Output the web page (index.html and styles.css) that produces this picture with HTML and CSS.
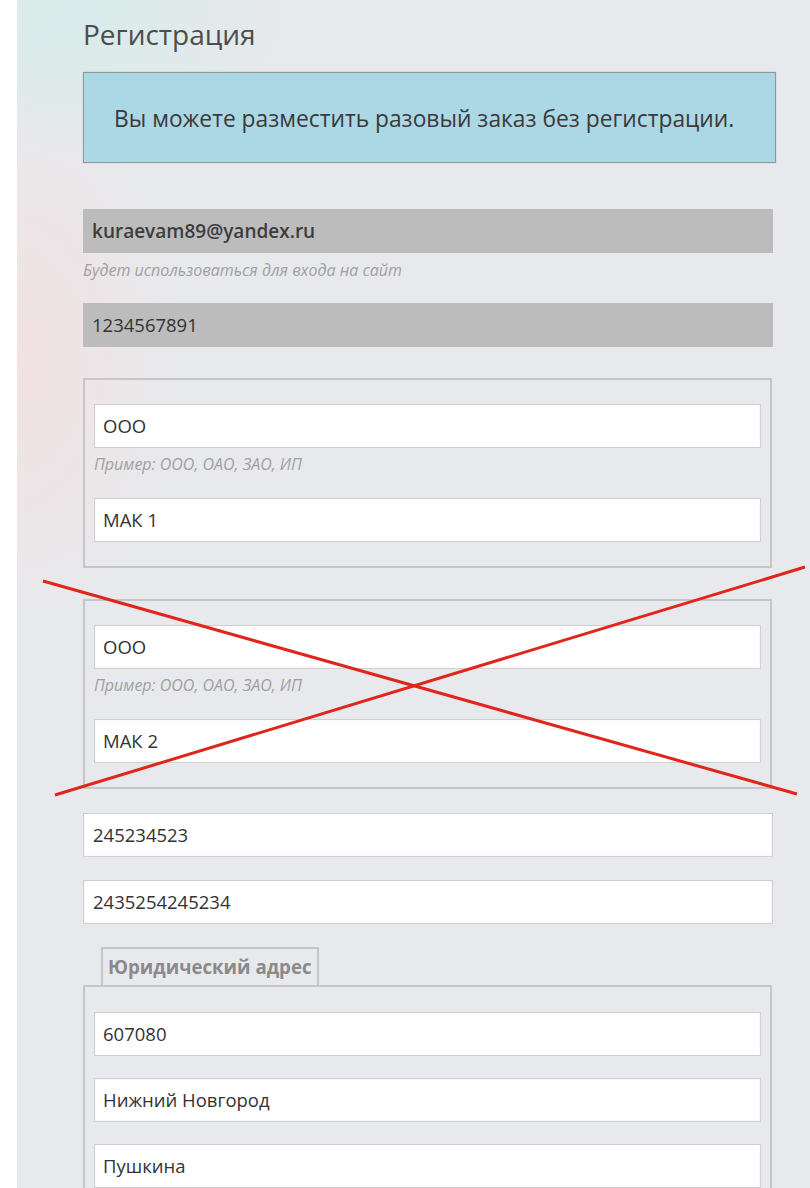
FILE: index.html
```html
<!DOCTYPE html>
<html lang="ru">
<head>
    <meta charset="UTF-8">
    <meta name="viewport" content="width=device-width, initial-scale=1.0">
    <title>Регистрация</title>
    <link rel="stylesheet" href="styles.css">
</head>

<body>
    <div class="panel">
        <h1 class="title">Регистрация</h1>

        <div class="notice">Вы можете разместить разовый заказ без регистрации.</div>

        <div class="field field-off email">kuraevam89@yandex.ru</div>
        <p class="hint">Будет использоваться для входа на сайт</p>

        <div class="field field-off phone">1234567891</div>

        <div class="group first">
            <div class="field">ООО</div>
            <p class="hint">Пример: ООО, ОАО, ЗАО, ИП</p>
            <div class="field second">МАК 1</div>
        </div>

        <div class="struck">
            <div class="group">
                <div class="field">ООО</div>
                <p class="hint">Пример: ООО, ОАО, ЗАО, ИП</p>
                <div class="field second">МАК 2</div>
            </div>
            <!-- крест поверх второй организации -->
            <svg class="cross" viewBox="0 0 810 260" width="810" height="260">
                <line x1="43" y1="22" x2="797" y2="235" />
                <line x1="55" y1="236" x2="805" y2="8" />
            </svg>
        </div>

        <div class="field plain inn">245234523</div>
        <div class="field plain ogrn">2435254245234</div>

        <div class="tab">Юридический адрес</div>
        <div class="group address">
            <div class="field">607080</div>
            <div class="field next">Нижний Новгород</div>
            <div class="field next">Пушкина</div>
        </div>
    </div>
</body>

</html>
```

FILE: styles.css
```css
body {
    margin: 0;
    background: #fff;
    font-family: "Open Sans", "Noto Sans", sans-serif;
    color: #333;
}

.panel {
    margin-left: 17px;
    min-height: 1188px;
    padding: 17px 0 0 66px;
    box-sizing: border-box;
    background:
        radial-gradient(ellipse 160px 260px at 0 360px, rgba(246, 222, 222, 0.7), rgba(246, 222, 222, 0) 100%),
        radial-gradient(ellipse 220px 140px at 60px 20px, rgba(214, 236, 234, 0.9), rgba(214, 236, 234, 0) 100%),
        #e8e9ec;
    overflow: hidden;
}

.title {
    margin: 0;
    font-size: 28px;
    line-height: 34px;
    font-weight: normal;
    color: #4d4d4d;
}

.notice {
    width: 631px;
    margin-top: 21px;
    padding: 31px 30px 28px 30px;
    background: #acd8e6;
    border: 1px solid #8f9a9e;
    box-shadow: 0 0 2px rgba(0, 0, 0, 0.15);
    font-size: 22.8px;
    line-height: 30px;
    color: #3a3a3a;
}

.field {
    height: 44px;
    box-sizing: border-box;
    padding-left: 8px;
    background: #fff;
    border: 1px solid #d0d0d0;
    box-shadow: inset 0 0 2px rgba(0, 0, 0, 0.08);
    font-size: 18.5px;
    line-height: 42px;
    color: #333;
}

.field-off {
    width: 690px;
    background: #bcbcbc;
    border-color: #bcbcbc;
    box-shadow: none;
}

.email {
    margin-top: 46px;
    font-size: 19px;
    font-weight: 600;
    color: #3c3c3c;
}

.phone {
    margin-top: 23px;
}

.hint {
    margin: 7px 0 0 0;
    font-size: 16px;
    line-height: 20px;
    font-style: italic;
    color: #a0a0a0;
}

.group {
    width: 689px;
    box-sizing: border-box;
    padding: 24px 9px 24px 9px;
    border: 2px solid #c6c6c6;
}

.group .hint {
    margin-top: 6px;
}

.group .second {
    margin-top: 24px;
}

.first {
    margin-top: 31px;
}

.struck {
    position: relative;
    margin-top: 31px;
}

.cross {
    position: absolute;
    left: -83px;
    top: -40px;
    pointer-events: none;
}

.cross line {
    stroke: #e0261b;
    stroke-width: 3;
}

.plain {
    width: 690px;
    padding-left: 9px;
}

.inn {
    margin-top: 24px;
}

.ogrn {
    margin-top: 23px;
}

.tab {
    display: inline-block;
    margin: 23px 0 0 18px;
    padding: 0 5px;
    height: 38px;
    box-sizing: border-box;
    border: 2px solid #c6c6c6;
    border-bottom: none;
    font-size: 18.7px;
    font-weight: bold;
    line-height: 36px;
    color: #8a8a8a;
    vertical-align: top;
}

.address {
    padding-top: 25px;
}

.address .next {
    margin-top: 22px;
}
```
